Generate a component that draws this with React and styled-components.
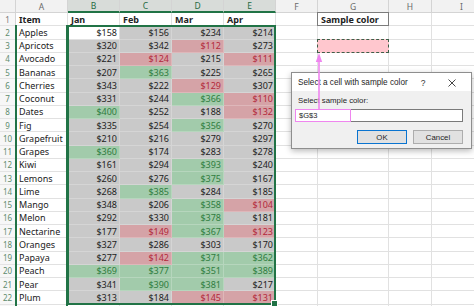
import React from "react";
import styled, { createGlobalStyle, css } from "styled-components";

const GlobalStyle = createGlobalStyle`
  html, body { margin: 0; padding: 0; background: #ffffff; }
  body { overflow: hidden; font-family: "Noto Sans", "Liberation Sans", sans-serif; }
`;

const GREEN = "#217346";
const MAGENTA = "#ef86ef";

const FILLS = {
  white: { bg: "#ffffff", ink: "#222222", line: "#e1e1e1" },
  plain: { bg: "#ffffff", ink: "#222222", line: "#e1e1e1" },
  n: { bg: "#c9c9c9", ink: "#222222", line: "rgba(255,255,255,0.22)" },
  r: { bg: "#d5a3a7", ink: "#b3293b", line: "rgba(255,255,255,0.22)" },
  g: { bg: "#a2cbab", ink: "#2f7d3f", line: "rgba(255,255,255,0.22)" },
  pink: { bg: "#ffc7ce", ink: "#222222", line: "#e1e1e1" },
};

const COLS = ["A", "B", "C", "D", "E", "F", "G", "H", "I", "J"];
const ACTIVE_COLS = ["B", "C", "D", "E"];

const DATA = [
  ["Apples", ["$158", "w"], ["$156", "n"], ["$234", "n"], ["$214", "n"]],
  ["Apricots", ["$320", "n"], ["$342", "n"], ["$112", "r"], ["$273", "n"]],
  ["Avocado", ["$221", "n"], ["$124", "r"], ["$215", "n"], ["$111", "r"]],
  ["Bananas", ["$207", "n"], ["$363", "g"], ["$225", "n"], ["$265", "n"]],
  ["Cherries", ["$343", "n"], ["$222", "n"], ["$129", "r"], ["$307", "n"]],
  ["Coconut", ["$331", "n"], ["$244", "n"], ["$366", "g"], ["$110", "r"]],
  ["Dates", ["$400", "g"], ["$252", "n"], ["$188", "n"], ["$132", "r"]],
  ["Fig", ["$335", "n"], ["$254", "n"], ["$356", "g"], ["$270", "n"]],
  ["Grapefruit", ["$210", "n"], ["$216", "n"], ["$279", "n"], ["$297", "n"]],
  ["Grapes", ["$360", "g"], ["$174", "n"], ["$283", "n"], ["$278", "n"]],
  ["Kiwi", ["$161", "n"], ["$294", "n"], ["$393", "g"], ["$240", "n"]],
  ["Lemons", ["$260", "n"], ["$276", "n"], ["$375", "g"], ["$167", "n"]],
  ["Lime", ["$268", "n"], ["$385", "g"], ["$284", "n"], ["$185", "n"]],
  ["Mango", ["$348", "n"], ["$206", "n"], ["$358", "g"], ["$104", "r"]],
  ["Melon", ["$292", "n"], ["$330", "n"], ["$378", "g"], ["$181", "n"]],
  ["Nectarine", ["$177", "n"], ["$149", "r"], ["$367", "g"], ["$123", "r"]],
  ["Oranges", ["$327", "n"], ["$286", "n"], ["$303", "n"], ["$170", "n"]],
  ["Papaya", ["$277", "n"], ["$142", "r"], ["$371", "g"], ["$362", "g"]],
  ["Peach", ["$369", "g"], ["$377", "g"], ["$351", "g"], ["$389", "g"]],
  ["Pear", ["$341", "n"], ["$390", "g"], ["$381", "g"], ["$217", "n"]],
  ["Plum", ["$313", "n"], ["$184", "n"], ["$145", "r"], ["$131", "r"]],
];

const placed = css`
  grid-row: ${(p) => p.$r};
  grid-column: ${(p) => p.$c};
`;

const Root = styled.div`
  position: relative;
  width: 474px;
  height: 306px;
  overflow: hidden;
  background: #ffffff;
`;

const Sheet = styled.div`
  display: grid;
  grid-template-columns: 16px 52px 52px 52px 52px 52px 42px 71px 43px 60px 40px;
  grid-template-rows: 13px repeat(23, 13.25px);
  font-size: 9px;
  color: #222222;
`;

const ColHeader = styled.div`
  ${placed};
  box-sizing: border-box;
  display: flex;
  align-items: center;
  justify-content: center;
  background: ${(p) => (p.$active ? "#d8dcd9" : "#f2f2f2")};
  color: ${(p) => (p.$active ? "#1f6b41" : "#6a6a6a")};
  border-right: 1px solid #d4d4d4;
  border-bottom: ${(p) => (p.$active ? `2px solid ${GREEN}` : "1px solid #d4d4d4")};
  font-size: 8.5px;
`;

const RowHeader = styled.div`
  ${placed};
  box-sizing: border-box;
  display: flex;
  align-items: center;
  justify-content: center;
  background: #f7f7f7;
  color: ${(p) => (p.$active ? "#5e8c6e" : "#7a7a7a")};
  border-bottom: 1px solid #e4e4e4;
  border-right: 1px solid #d4d4d4;
  font-size: 8px;
`;

const Cell = styled.div`
  ${placed};
  box-sizing: border-box;
  display: flex;
  align-items: center;
  justify-content: ${(p) => (p.$num ? "flex-end" : "flex-start")};
  padding: 0 2px 0 3px;
  background: ${(p) => FILLS[p.$fill].bg};
  color: ${(p) => FILLS[p.$fill].ink};
  border-right: 1px solid ${(p) => FILLS[p.$fill].line};
  border-bottom: 1px solid ${(p) => FILLS[p.$fill].line};
  font-weight: ${(p) => (p.$bold ? 700 : 400)};
  white-space: nowrap;
`;

const SampleHead = styled(Cell)`
  border: 1px solid #7c7c7c;
  margin: -1px 0 0 -1px;
`;

const SampleCell = styled(Cell)`
  border: 1.5px dashed #3d5f48;
  margin: -1px 0 0 -1px;
`;

const SelectionFrame = styled.div`
  ${placed};
  position: relative;
  margin: -1px 0 0 -1px;
  border: 2px solid ${GREEN};
  border-top-width: ${(p) => (p.$open ? "0" : "2px")};
  border-bottom-width: ${(p) => (p.$open ? "0" : "2px")};
  pointer-events: none;
`;

const FillHandle = styled.span`
  position: absolute;
  right: -4px;
  bottom: -4px;
  width: 5px;
  height: 5px;
  background: ${GREEN};
  border: 1px solid #ffffff;
`;

const Dialog = styled.div`
  position: absolute;
  left: 291px;
  top: 72px;
  width: 181px;
  height: 77px;
  box-sizing: border-box;
  display: flex;
  flex-direction: column;
  background: #f0f0f0;
  border: 1px solid #8e8e8e;
  box-shadow: 0 2px 6px rgba(0, 0, 0, 0.28);
  font-family: "Liberation Sans", "Noto Sans", sans-serif;
  font-size: 7.5px;
  color: #1e1e1e;
`;

const TitleBar = styled.div`
  height: 18px;
  display: flex;
  align-items: center;
  padding: 1px 0 0 6px;
  box-sizing: border-box;
  background: #ffffff;
`;

const Title = styled.span`
  flex: 1;
  font-size: 8.2px;
`;

const HelpMark = styled.span`
  width: 20px;
  text-align: center;
  font-size: 8.5px;
  color: #333333;
`;

const CloseBox = styled.span`
  width: 38px;
  display: flex;
  justify-content: center;
  align-items: center;
`;

const Body = styled.div`
  flex: 1;
  display: flex;
  flex-direction: column;
  padding: 5px 8px 0 3px;
`;

const FieldLabel = styled.div`
  padding-left: 3px;
  line-height: 10px;
  height: 11px;
  font-size: 7.8px;
`;

const InputBox = styled.div`
  position: relative;
  margin-top: 2px;
  height: 13px;
  box-sizing: border-box;
  display: flex;
  align-items: center;
  padding-left: 3px;
  background: #ffffff;
  border: 1px solid #7a7a7a;
  font-size: 7.5px;
`;

const Highlight = styled.span`
  position: absolute;
  left: -1px;
  top: -1px;
  width: 56px;
  height: 13px;
  box-sizing: border-box;
  border: 1.5px solid ${MAGENTA};
`;

const ButtonRow = styled.div`
  margin-top: 8px;
  display: flex;
  justify-content: flex-end;
  gap: 6px;
`;

const Button = styled.div`
  width: 50px;
  height: 14px;
  box-sizing: border-box;
  display: flex;
  align-items: center;
  justify-content: center;
  background: #e1e1e1;
  border: ${(p) => (p.$primary ? "1.5px solid #0a74d0" : "1px solid #adadad")};
  font-size: 7.8px;
`;

const Arrow = styled.svg`
  position: absolute;
  left: 314px;
  top: 52px;
  width: 10px;
  height: 57px;
  overflow: visible;
`;

const colOf = (c) => COLS.indexOf(c) + 2;

export default function App() {
  const cells = [];

  cells.push(<ColHeader key="corner" $r={1} $c={1} />);
  COLS.forEach((c) =>
    cells.push(
      <ColHeader key={`h${c}`} $r={1} $c={colOf(c)} $active={ACTIVE_COLS.includes(c)}>
        {c === "J" ? "" : c}
      </ColHeader>
    )
  );

  cells.push(
    <RowHeader key="r1" $r={2} $c={1}>
      1
    </RowHeader>
  );
  ["Item", "Jan", "Feb", "Mar", "Apr"].forEach((t, j) =>
    cells.push(
      <Cell key={`1${t}`} $r={2} $c={2 + j} $fill="plain" $bold>
        {t}
      </Cell>
    )
  );
  ["F", "G", "H", "I", "J"].forEach((c) => {
    if (c === "G") {
      cells.push(
        <SampleHead key="1G" $r={2} $c={colOf(c)} $fill="plain" $bold>
          Sample color
        </SampleHead>
      );
    } else {
      cells.push(<Cell key={`1${c}`} $r={2} $c={colOf(c)} $fill="plain" />);
    }
  });

  DATA.forEach(([item, ...vals], i) => {
    const r = i + 2;
    const gr = r + 1;
    cells.push(
      <RowHeader key={`r${r}`} $r={gr} $c={1} $active>
        {r}
      </RowHeader>
    );
    cells.push(
      <Cell key={`${r}A`} $r={gr} $c={2} $fill="plain">
        {item}
      </Cell>
    );
    vals.forEach(([v, f], j) =>
      cells.push(
        <Cell key={`${r}${j}`} $r={gr} $c={3 + j} $num $fill={f === "w" ? "white" : f}>
          {v}
        </Cell>
      )
    );
    ["F", "G", "H", "I", "J"].forEach((c) => {
      if (r === 3 && c === "G") {
        cells.push(<SampleCell key={`${r}G`} $r={gr} $c={colOf(c)} $fill="pink" />);
      } else {
        cells.push(<Cell key={`${r}${c}`} $r={gr} $c={colOf(c)} $fill="plain" />);
      }
    });
  });

  cells.push(<RowHeader key="r23" $r={24} $c={1} />);
  COLS.forEach((c) => cells.push(<Cell key={`23${c}`} $r={24} $c={colOf(c)} $fill="plain" />));

  return (
    <Root>
      <GlobalStyle />
      <Sheet>
        {cells}
        <SelectionFrame $c="2 / 3" $r="3 / 25" $open />
        <SelectionFrame $c="3 / 7" $r="3 / 24">
          <FillHandle />
        </SelectionFrame>
      </Sheet>

      <Dialog>
        <TitleBar>
          <Title>Select a cell with sample color</Title>
          <HelpMark>?</HelpMark>
          <CloseBox>
            <svg width="8" height="8" viewBox="0 0 8 8">
              <path d="M0.5 0.5 L7.5 7.5 M7.5 0.5 L0.5 7.5" stroke="#333" strokeWidth="0.9" fill="none" />
            </svg>
          </CloseBox>
        </TitleBar>
        <Body>
          <FieldLabel>Select sample color:</FieldLabel>
          <InputBox>
            $G$3
            <Highlight />
          </InputBox>
          <ButtonRow>
            <Button $primary>OK</Button>
            <Button>Cancel</Button>
          </ButtonRow>
        </Body>
      </Dialog>

      <Arrow viewBox="0 0 10 57">
        <polygon points="5,1 1.8,10 8.2,10" fill={MAGENTA} />
        <line x1="5" y1="9" x2="5" y2="57" stroke={MAGENTA} strokeWidth="1.6" />
      </Arrow>
    </Root>
  );
}
